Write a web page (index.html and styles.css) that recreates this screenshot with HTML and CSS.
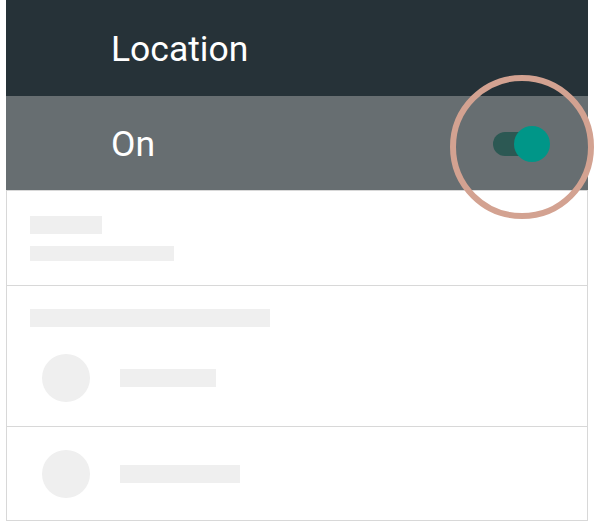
FILE: index.html
```html
<!DOCTYPE html>
<html>
<head>
<meta charset="utf-8">
<link rel="stylesheet" href="styles.css">
</head>
<body>
<div class="panel">
  <div class="header"><span class="title">Location</span></div>
  <div class="status-row">
    <span class="title">On</span>
    <div class="toggle"><span class="track"></span><span class="thumb"></span></div>
    <div class="ring"></div>
  </div>
  <div class="list">
    <div class="section sec-one">
      <div class="ph ph-a"></div>
      <div class="ph ph-b"></div>
    </div>
    <div class="section sec-two">
      <div class="ph ph-c"></div>
      <div class="item">
        <div class="avatar"></div>
        <div class="ph ph-d"></div>
      </div>
    </div>
    <div class="section sec-three">
      <div class="item">
        <div class="avatar"></div>
        <div class="ph ph-e"></div>
      </div>
    </div>
  </div>
</div>
</body>
</html>
```
FILE: styles.css
```css
html, body {
  margin: 0;
  padding: 0;
  background: #ffffff;
}
body {
  font-family: Roboto, "Liberation Sans", sans-serif;
  overflow: hidden;
}
.panel {
  margin: 0 6px;
  width: 582px;
}
.header {
  height: 96px;
  background: #263238;
  display: flex;
  align-items: center;
  padding-left: 105px;
  box-sizing: border-box;
}
.title {
  color: #ffffff;
  font-size: 35.5px;
  line-height: 1;
  margin-top: 3px;
}
.status-row {
  position: relative;
  height: 94px;
  background: #676e71;
  display: flex;
  align-items: center;
  justify-content: space-between;
  padding-left: 105px;
  padding-right: 38px;
  box-sizing: border-box;
}
.toggle {
  position: relative;
  width: 57px;
  height: 36px;
  margin-top: 1px;
}
.track {
  position: absolute;
  left: 0;
  top: 6px;
  width: 48px;
  height: 24px;
  border-radius: 12px;
  background: #2c5853;
}
.thumb {
  position: absolute;
  right: 0;
  top: 0;
  width: 36px;
  height: 36px;
  border-radius: 50%;
  background: #009688;
}
.ring {
  position: absolute;
  left: 444px;
  top: -21px;
  width: 144px;
  height: 144px;
  box-sizing: border-box;
  border: 6px solid #d3a291;
  border-radius: 50%;
  z-index: 2;
}
.list {
  border: 1px solid #d8d8d8;
  background: #ffffff;
}
.section {
  display: flex;
  flex-direction: column;
  padding-left: 23px;
  box-sizing: border-box;
}
.section + .section {
  border-top: 1px solid #d8d8d8;
}
.sec-one {
  height: 94px;
  padding-top: 25px;
  gap: 12px;
}
.sec-two {
  height: 141px;
  padding-top: 23px;
  gap: 27px;
}
.sec-three {
  height: 94px;
  padding-top: 23px;
}
.ph {
  background: #efefef;
  height: 18px;
}
.ph-a { width: 72px; }
.ph-b { width: 144px; height: 15px; }
.ph-c { width: 240px; }
.ph-d { width: 96px; }
.ph-e { width: 120px; }
.item {
  display: flex;
  align-items: center;
  gap: 30px;
  padding-left: 12px;
}
.avatar {
  width: 48px;
  height: 48px;
  border-radius: 50%;
  background: #efefef;
}
```
